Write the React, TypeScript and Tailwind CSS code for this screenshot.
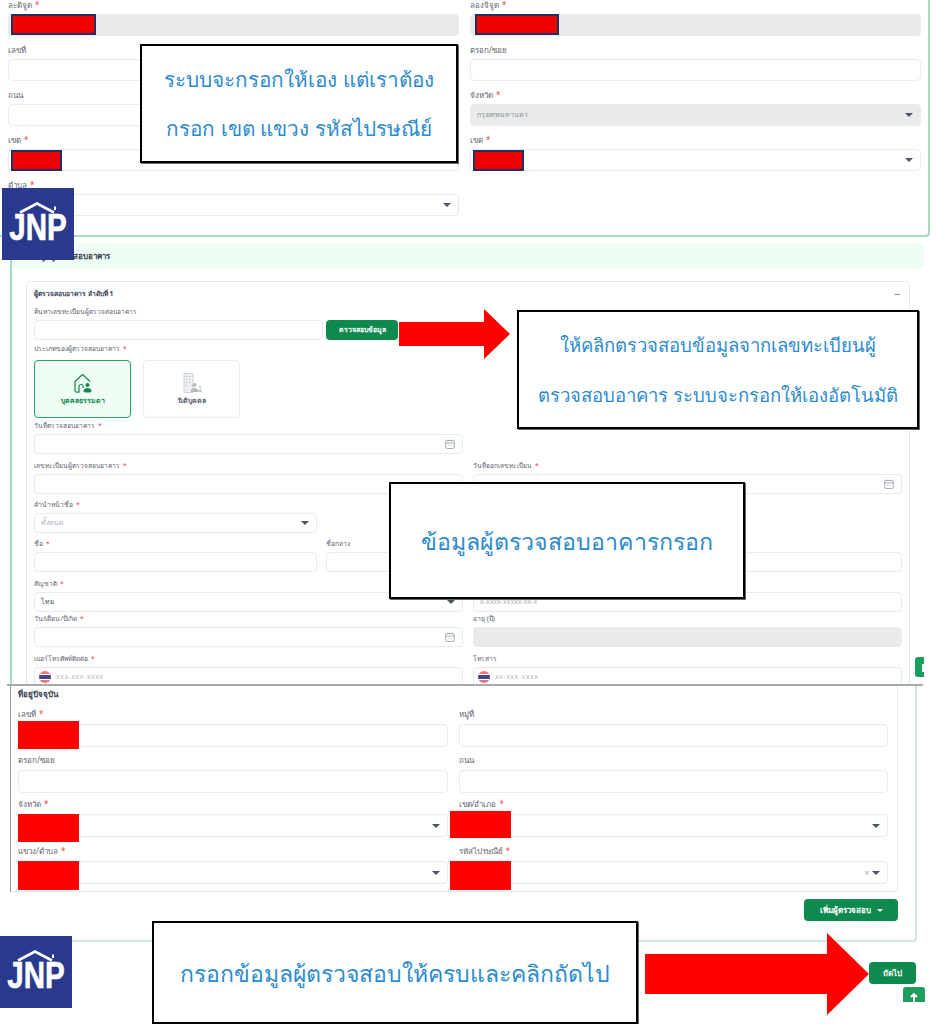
const font = { fontFamily: '"Noto Sans", "Liberation Sans", sans-serif' };

const TOP_LABEL = "pb-[4px] text-[8px]";
const MID_LABEL = "pb-[2px] text-[6.7px]";
const LOW_LABEL = "pb-[6px] text-[8px]";

function Label({ text, req, className = "" }: { text: string; req?: boolean; className?: string }) {
  return (
    <div className={`flex h-[14px] items-center gap-[3px] leading-none text-[#5f6670] ${className}`}>
      <span>{text}</span>
      {req && <span className="text-[#ef4444]">*</span>}
    </div>
  );
}

function Caret() {
  return <div className="h-0 w-0 border-x-[4px] border-t-[4px] border-x-transparent border-t-[#4b5563]" />;
}

function CalendarIcon() {
  return (
    <svg width="10" height="10" viewBox="0 0 10 10" fill="none" stroke="#9ca3af" strokeWidth="0.9">
      <rect x="0.7" y="1.5" width="8.6" height="8" rx="1.5" />
      <path d="M0.7 4h8.6M3 .5v1.6M7 .5v1.6M3 6.5h.6M4.8 6.5h.6M6.6 6.5h.6" />
    </svg>
  );
}

function Flag() {
  return (
    <svg width="12" height="12" viewBox="0 0 12 12" className="shrink-0">
      <circle cx="6" cy="6" r="6" fill="#f8717a" />
      <path d="M.3 4h11.4v4H.3z" fill="#3b4a8c" />
      <path d="M.8 3h10.4v1H.8zM.8 8h10.4v1H.8z" fill="#fff" />
    </svg>
  );
}

function Box({
  h = "h-[20px]",
  select,
  calendar,
  disabled,
  value,
  placeholder,
  flag,
  extra,
}: {
  h?: string;
  select?: boolean;
  calendar?: boolean;
  disabled?: boolean;
  value?: string;
  placeholder?: string;
  flag?: boolean;
  extra?: React.ReactNode;
}) {
  return (
    <div
      className={`flex ${h} w-full items-center rounded-[4px] border border-[#e9ecef] pr-[7px] text-[7px] ${
        flag ? "pl-[4px]" : "pl-[6px]"
      } ${disabled ? "bg-[#e9ebeb]" : "bg-white"}`}
    >
      {flag && <Flag />}
      {flag && <span className="ml-[5px] tracking-[0.5px] text-[#b6bcc4]">{placeholder}</span>}
      {!flag && value && <span className={disabled ? "text-[#8a9098]" : "text-[#4b5563]"}>{value}</span>}
      {!flag && placeholder && <span className="text-[#aeb4bc]">{placeholder}</span>}
      <div className="ml-auto flex items-center gap-[3px]">
        {extra}
        {select && <Caret />}
        {calendar && <CalendarIcon />}
      </div>
    </div>
  );
}

function Field({
  label,
  req,
  labelClass = MID_LABEL,
  className = "",
  ...box
}: {
  label: string;
  req?: boolean;
  labelClass?: string;
  className?: string;
} & React.ComponentProps<typeof Box>) {
  return (
    <div className={className}>
      <Label text={label} req={req} className={labelClass} />
      <Box {...box} />
    </div>
  );
}

function HouseIcon() {
  return (
    <svg width="22" height="22" viewBox="0 0 22 22" fill="none" stroke="#0f8a4f" strokeWidth="1.2" strokeLinejoin="round">
      <path d="M3 19V9.5L10.5 2.5 18 9.5" />
      <path d="M3 19c0 1 1 1.2 2 1.2h2V14.5a2 2 0 0 1 4 0V16" />
      <circle cx="15.5" cy="13" r="2" fill="#0f8a4f" stroke="none" />
      <path d="M11.5 19c0-2 2-3 4-3s4 1 4 3c0 1-1 1.5-4 1.5s-4-.5-4-1.5z" fill="#0f8a4f" stroke="none" />
    </svg>
  );
}

function BuildingIcon() {
  return (
    <svg width="22" height="22" viewBox="0 0 22 22" fill="none">
      <path d="M3 1.5h9v19H3z" fill="#eef0f2" stroke="#c5c9ce" strokeWidth="0.8" />
      <path d="M5 4.5h1.2M8 4.5h1.2M5 7.5h1.2M8 7.5h1.2M5 10.5h1.2M8 10.5h1.2M5 13.5h1.2" stroke="#aab0b6" strokeWidth="0.8" />
      <circle cx="13.5" cy="13" r="2" fill="#b3b8bd" />
      <path d="M9.5 20c0-3 2-4 4-4s4 1 4 4z" fill="#b3b8bd" />
      <circle cx="19" cy="15" r="1.3" fill="#c8ccd0" />
      <path d="M17.5 20c0-2 .5-3 1.6-3s1.9 1 1.9 3z" fill="#c8ccd0" />
    </svg>
  );
}

function Logo({ className }: { className: string }) {
  return (
    <div className={`absolute flex h-[72px] w-[72px] flex-col items-center bg-[#293a8e] pt-[13px] ${className}`}>
      <svg width="44" height="14" viewBox="0 0 44 14" fill="none" stroke="#fff" strokeWidth="2.6" className="shrink-0">
        <path d="M4 11.5 21 2.5l17 9" />
        <path d="M39 5.5v3.5" strokeWidth="2" />
      </svg>
      <div
        className="-mt-[1px] scale-x-[0.82] text-[36px] font-bold leading-[27px] text-white"
        style={{ fontFamily: '"Liberation Sans", sans-serif', WebkitTextStroke: "0.6px #fff" }}
      >
        JNP
      </div>
    </div>
  );
}

function Callout({ className, lines, leading }: { className: string; lines: string[]; leading: string }) {
  return (
    <div
      className={`absolute flex flex-col items-center justify-center border-2 border-black bg-white text-center text-[#2b8ad0] shadow-[1px_1px_0_#666] ${leading} ${className}`}
    >
      {lines.map((l) => (
        <div key={l}>{l}</div>
      ))}
    </div>
  );
}

function Arrow({ className, w, h, neck, head }: { className: string; w: number; h: number; neck: number; head: number }) {
  const top = (h - neck) / 2;
  return (
    <svg width={w} height={h} viewBox={`0 0 ${w} ${h}`} className={`absolute ${className}`}>
      <polygon
        fill="#ff0000"
        points={`0,${top} ${w - head},${top} ${w - head},0 ${w},${h / 2} ${w - head},${h} ${w - head},${top + neck} 0,${top + neck}`}
      />
    </svg>
  );
}

function Redact({ className, navy }: { className: string; navy?: boolean }) {
  return <div className={`absolute ${navy ? "border-2 border-[#23305f] bg-[#ee0000]" : "bg-[#ff0000]"} ${className}`} />;
}

function TopForm() {
  return (
    <div className="h-[237px] w-[930px] rounded-br-[4px] border-r-2 border-b-2 border-[#a6dcc0] pl-[8px] pr-[7px]">
      <div className="grid grid-cols-2 gap-x-[11px] gap-y-[9px]">
        <Field labelClass={TOP_LABEL} label="ละติจูด" req h="h-[22px]" disabled />
        <Field labelClass={TOP_LABEL} label="ลองจิจูด" req h="h-[22px]" disabled />
        <Field labelClass={TOP_LABEL} label="เลขที่" h="h-[22px]" />
        <Field labelClass={TOP_LABEL} label="ตรอก/ซอย" h="h-[22px]" />
        <Field labelClass={TOP_LABEL} label="ถนน" h="h-[22px]" />
        <Field labelClass={TOP_LABEL} label="จังหวัด" req h="h-[22px]" select disabled value="กรุงเทพมหานคร" />
        <Field labelClass={TOP_LABEL} label="เขต" req h="h-[22px]" select />
        <Field labelClass={TOP_LABEL} label="เขต" req h="h-[22px]" select />
        <Field labelClass={TOP_LABEL} label="ตำบล" req h="h-[22px]" select />
      </div>
    </div>
  );
}

function InspectorForm() {
  return (
    <div className="relative ml-[10px] mt-[6px] h-[441px] w-[914px] overflow-hidden border-l-2 border-[#a6dcc0]">
      <div className="flex h-[26px] items-center bg-[#f0fdf4] pl-[18px] text-[8px] font-bold text-[#374151]">
        ข้อมูลผู้ตรวจสอบอาคาร
      </div>
      <div className="ml-[14px] mt-[12px] h-[420px] w-[884px] rounded-[4px] border border-[#e6e9ec] px-[7px]">
        <div className="flex h-[24px] items-center justify-between pr-[2px] pt-[1px] text-[6.7px] font-bold text-[#374151]">
          <span>ผู้ตรวจสอบอาคาร ลำดับที่ 1</span>
          <span className="text-[11px] font-normal text-[#6b7280]">−</span>
        </div>
        <div>
          <Label text="ค้นหาเลขทะเบียนผู้ตรวจสอบอาคาร" className={MID_LABEL} />
          <div className="flex gap-[3px]">
            <div className="w-[289px]">
              <Box />
            </div>
            <div className="flex h-[20px] w-[72px] items-center justify-center rounded-[4px] bg-[#0f8a4f] text-[7px] font-semibold text-white">
              ตรวจสอบข้อมูล
            </div>
          </div>
        </div>
        <Label text="ประเภทของผู้ตรวจสอบอาคาร" req className={`mt-[3px] ${MID_LABEL}`} />
        <div className="mt-[3px] flex gap-[12px]">
          <div className="flex h-[58px] w-[97px] flex-col items-center justify-center rounded-[4px] border border-[#22a565] bg-[#f0fdf4]">
            <HouseIcon />
            <div className="mt-[2px] text-[7px] font-semibold text-[#0f8a4f]">บุคคลธรรมดา</div>
          </div>
          <div className="flex h-[58px] w-[97px] flex-col items-center justify-center rounded-[4px] border border-[#e9ecef] bg-white">
            <BuildingIcon />
            <div className="mt-[2px] text-[7px] font-semibold text-[#5f6670]">นิติบุคคล</div>
          </div>
        </div>
        <Field label="วันที่ตรวจสอบอาคาร" req calendar className="mt-[2px] w-[429px]" />
        <div className="mt-[6px] grid grid-cols-2 gap-x-[10px]">
          <Field label="เลขทะเบียนผู้ตรวจสอบอาคาร" req />
          <Field label="วันที่ออกเลขทะเบียน" req calendar />
        </div>
        <Field label="คำนำหน้าชื่อ" req select placeholder="ทั้งหมด" className="mt-[5px] w-[283px]" />
        <div className="mt-[5px] grid grid-cols-3 gap-x-[9px]">
          <Field label="ชื่อ" req />
          <Field label="ชื่อกลาง" />
          <Field label="" />
        </div>
        <div className="mt-[6px] grid grid-cols-2 gap-x-[10px]">
          <Field label="สัญชาติ" req select value="ไทย" />
          <Field label="" placeholder="x-xxxx-xxxxx-xx-x" />
        </div>
        <div className="mt-[1px] grid grid-cols-2 gap-x-[10px]">
          <Field label="วัน/เดือน/ปีเกิด" req calendar />
          <Field label="อายุ (ปี)" disabled />
        </div>
        <div className="mt-[6px] grid grid-cols-2 gap-x-[10px]">
          <Field label="เบอร์โทรศัพท์ติดต่อ" req flag placeholder="xxx-xxx-xxxx" />
          <Field label="โทรสาร" flag placeholder="xx-xxx-xxxx" />
        </div>
      </div>
      <div className="absolute right-0 top-[414px] h-[20px] w-[9px] rounded-l-[3px] bg-[#16a05d]">
        <div className="absolute right-0 top-[7px] h-[8px] w-[2px] bg-white" />
      </div>
    </div>
  );
}

function AddressForm() {
  return (
    <div className="relative h-[338px] w-full">
      <div className="h-[256px] w-[917px] rounded-br-[4px] border-r-2 border-b-2 border-[#cfeadc]">
        <div className="ml-[10px] h-[206px] w-[888px] rounded-br-[4px] border-x border-b border-l-[#8f9698] border-b-[#e3e6e8] border-r-[#eceff1] pl-[7px] pr-[9px]">
          <div className="flex h-[16px] items-center text-[8px] font-bold text-[#374151]">ที่อยู่ปัจจุบัน</div>
          <div className="grid grid-cols-2 gap-x-[11px]">
            <Field labelClass={LOW_LABEL} label="เลขที่" req h="h-[23px]" className="mt-[8px]" />
            <Field labelClass={LOW_LABEL} label="หมู่ที่" h="h-[23px]" className="mt-[8px]" />
            <Field labelClass={LOW_LABEL} label="ตรอก/ซอย" h="h-[23px]" className="mt-[9px]" />
            <Field labelClass={LOW_LABEL} label="ถนน" h="h-[23px]" className="mt-[9px]" />
            <Field labelClass={LOW_LABEL} label="จังหวัด" req select h="h-[23px]" className="mt-[7px]" />
            <Field labelClass={LOW_LABEL} label="เขต/อำเภอ" req select h="h-[23px]" className="mt-[7px]" />
            <Field labelClass={LOW_LABEL} label="แขวง/ตำบล" req select h="h-[23px]" className="mt-[10px]" />
            <Field
              labelClass={LOW_LABEL}
              label="รหัสไปรษณีย์"
              req
              select
              h="h-[23px]"
              className="mt-[10px]"
              extra={<span className="text-[8px] text-[#9ca3af]">×</span>}
            />
          </div>
        </div>
        <div className="mt-[7px] flex w-[898px] justify-end">
          <div className="flex h-[22px] w-[94px] items-center justify-center gap-[6px] rounded-[4px] bg-[#0f8a4f] text-[8px] font-semibold text-white">
            เพิ่มผู้ตรวจสอบ
            <div className="h-0 w-0 border-x-[3px] border-t-[3px] border-x-transparent border-t-white" />
          </div>
        </div>
      </div>
      <div className="mt-[20px] flex w-[916px] justify-end">
        <div className="flex h-[22px] w-[47px] items-center justify-center rounded-[4px] bg-[#0f8a4f] text-[8px] font-semibold text-white">
          ถัดไป
        </div>
      </div>
      <div className="absolute left-[903px] top-[301px] flex h-[15px] w-[22px] justify-center rounded-t-[3px] bg-[#1f9d5f] pt-[6px]">
        <svg width="8" height="9" viewBox="0 0 8 9" fill="none" stroke="#fff" strokeWidth="1.8">
          <path d="M4 9V1M1 4l3-3 3 3" />
        </svg>
      </div>
    </div>
  );
}

export default function App() {
  return (
    <div className="relative h-[1024px] w-[937px] overflow-hidden bg-white" style={font}>
      <TopForm />
      <InspectorForm />
      <div className="ml-[7px] h-[2px] w-[916px] bg-[#a3abab]" />
      <AddressForm />

      <Redact navy className="left-[11px] top-[14px] h-[21px] w-[85px]" />
      <Redact navy className="left-[475px] top-[14px] h-[21px] w-[84px]" />
      <Redact navy className="left-[11px] top-[150px] h-[21px] w-[51px]" />
      <Redact navy className="left-[473px] top-[150px] h-[21px] w-[51px]" />
      <Redact className="left-[18px] top-[721px] h-[28px] w-[61px]" />
      <Redact className="left-[18px] top-[814px] h-[28px] w-[61px]" />
      <Redact className="left-[18px] top-[861px] h-[29px] w-[61px]" />
      <Redact className="left-[450px] top-[811px] h-[27px] w-[61px]" />
      <Redact className="left-[450px] top-[861px] h-[29px] w-[61px]" />

      <Logo className="left-[2px] top-[188px]" />
      <Logo className="left-0 top-[936px]" />

      <Callout
        className="left-[140px] top-[44px] h-[119px] w-[318px] text-[20.7px]"
        leading="leading-[49px]"
        lines={["ระบบจะกรอกให้เอง แต่เราต้อง", "กรอก เขต แขวง รหัสไปรษณีย์"]}
      />
      <Arrow className="left-[399px] top-[309px]" w={111} h={50} neck={24} head={26} />
      <Callout
        className="left-[517px] top-[310px] h-[119px] w-[402px] text-[18.5px]"
        leading="leading-[50px]"
        lines={["ให้คลิกตรวจสอบข้อมูลจากเลขทะเบียนผู้", "ตรวจสอบอาคาร ระบบจะกรอกให้เองอัตโนมัติ"]}
      />
      <Callout
        className="left-[389px] top-[482px] h-[117px] w-[356px] text-[23.2px]"
        leading="leading-[50px]"
        lines={["ข้อมูลผู้ตรวจสอบอาคารกรอก"]}
      />
      <Callout
        className="left-[152px] top-[921px] h-[103px] w-[486px] text-[23px]"
        leading="leading-[50px]"
        lines={["กรอกข้อมูลผู้ตรวจสอบให้ครบและคลิกถัดไป"]}
      />
      <Arrow className="left-[645px] top-[933px]" w={224} h={82} neck={40} head={42} />
    </div>
  );
}
